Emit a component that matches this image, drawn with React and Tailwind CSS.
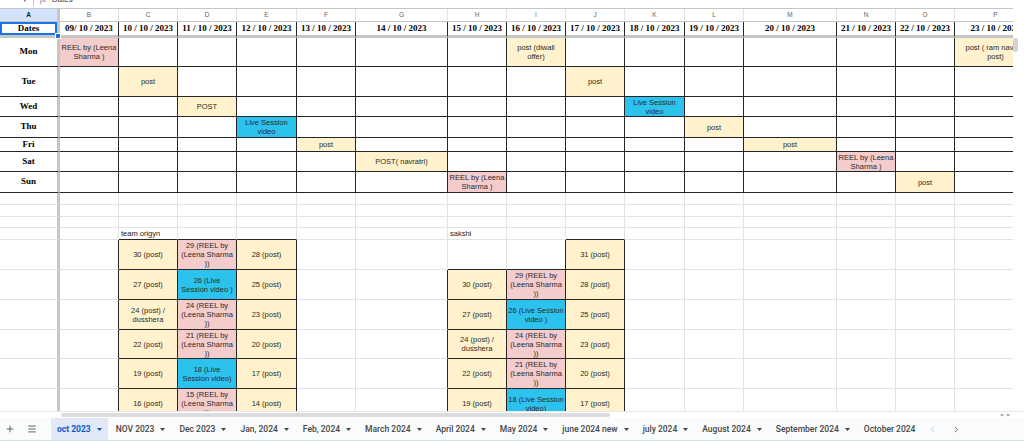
import { Plus, Menu, ChevronLeft, ChevronRight } from 'lucide-react';

const COLS =
  'grid-cols-[60px_59px_59px_59px_60px_59px_92px_59px_59px_59px_60px_59px_93px_59px_59px_82px]';
const ROWS =
  'grid-rows-[16px_29px_30px_20px_21px_14px_20px_21px_12px_12px_11px_12px_30px_30px_30px_29px_30px_30px]';
const LETTERS = 'ABCDEFGHIJKLMNOP'.split('');

const Y = 'bg-[#fff2cc]';
const R = 'bg-[#f4cccc]';
const B = 'bg-[#2cc2ee] text-[#0c2c48]';

const DATES = [
  '09/ 10 / 2023', '10 / 10 / 2023', '11 / 10 / 2023', '12 / 10 / 2023', '13 / 10 / 2023',
  '14 / 10 / 2023', '15 / 10 / 2023', '16 / 10 / 2023', '17 / 10 / 2023', '18 / 10 / 2023',
  '19 / 10 / 2023', '20 / 10 / 2023', '21 / 10 / 2023', '22 / 10 / 2023', '23 / 10 / 2023',
];

const REEL = 'REEL by (Leena\nSharma )';
const LIVE = 'Live Session\nvideo';

// day label + {column index: [colour, text]}
const WEEK = [
  ['Mon', { 1: [R, REEL], 8: [Y, 'post (diwali\noffer)'], 15: [Y, 'post ( ram navami\npost)'] }],
  ['Tue', { 2: [Y, 'post'], 9: [Y, 'post'] }],
  ['Wed', { 3: [Y, 'POST'], 10: [B, LIVE] }],
  ['Thu', { 4: [B, LIVE], 11: [Y, 'post'] }],
  ['Fri', { 5: [Y, 'post'], 12: [Y, 'post'] }],
  ['Sat', { 6: [Y, 'POST( navratri)'], 13: [R, REEL] }],
  ['Sun', { 7: [R, REEL], 14: [Y, 'post'] }],
];

const reel = (n) => [R, `${n} (REEL by (Leena Sharma ))`];
const post = (n) => [Y, `${n} (post)`];

const ORIGYN = [
  [post(30), reel(29), post(28)],
  [post(27), [B, '26 (Live\nSession video )'], post(25)],
  [[Y, '24 (post) /\ndusshera'], reel(24), post(23)],
  [post(22), reel(21), post(20)],
  [post(19), [B, '18 (Live\nSession video)'], post(17)],
  [post(16), reel(15), post(14)],
];

const SAKSHI = [
  [null, null, post(31)],
  [post(30), reel(29), post(28)],
  [post(27), [B, '26 (Live Session\nvideo )'], post(25)],
  [[Y, '24 (post) /\ndusshera'], reel(24), post(23)],
  [post(22), reel(21), post(20)],
  [post(19), [B, '18 (Live Session\nvideo)'], post(17)],
];

const TABS = [
  'NOV 2023', 'Dec 2023', 'Jan, 2024', 'Feb, 2024', 'March 2024', 'April 2024', 'May 2024',
  'june 2024 new', 'july 2024', 'August 2024', 'September 2024', 'October 2024',
];

function buildRows() {
  const rows = [];
  rows.push([{ t: 'Dates', head: true, sel: true }, ...DATES.map((t) => ({ t, head: true }))]);
  WEEK.forEach(([day, marks]) => {
    const row = [{ t: day, head: true }];
    for (let c = 1; c < 16; c++) row.push(marks[c] ? { bg: marks[c][0], t: marks[c][1] } : null);
    rows.push(row);
  });
  for (let i = 0; i < 3; i++) rows.push(Array(16).fill(null));
  const labels = Array(16).fill(null);
  labels[2] = { t: 'team origyn', label: true };
  labels[7] = { t: 'sakshi', label: true };
  rows.push(labels);
  for (let i = 0; i < 6; i++) {
    const row = Array(16).fill(null);
    ORIGYN[i].forEach((cell, k) => { if (cell) row[2 + k] = { bg: cell[0], t: cell[1] }; });
    SAKSHI[i].forEach((cell, k) => { if (cell) row[7 + k] = { bg: cell[0], t: cell[1] }; });
    rows.push(row);
  }
  return rows;
}

// cells that carry the dark outline
function boxed(r, c) {
  if (c > 15 || r > 17) return false;
  if (r <= 7) return true;
  if (r >= 12 && c >= 2 && c <= 4) return true;
  if (r >= 12 && c === 9) return true;
  if (r >= 13 && (c === 7 || c === 8)) return true;
  return false;
}

function Cell({ cell, r, c }) {
  const right =
    c === 0
      ? 'border-r-[3px] border-r-[#c4c7c5]'
      : boxed(r, c) || boxed(r, c + 1)
        ? 'border-r border-r-[#262626]'
        : 'border-r border-r-[#e2e2e2]';
  const bottom =
    r === 0
      ? 'border-b-[3px] border-b-[#c4c7c5]'
      : boxed(r, c) || boxed(r + 1, c)
        ? 'border-b border-b-[#262626]'
        : 'border-b border-b-[#e2e2e2]';

  if (!cell) return <div className={`${right} ${bottom}`} />;

  if (cell.label) {
    return (
      <div className={`${right} ${bottom} relative z-10 flex items-center pl-[2px] whitespace-nowrap text-[7.5px] text-[#222]`}>
        {cell.t}
      </div>
    );
  }

  if (cell.head) {
    return (
      <div
        className={`${right} ${bottom} relative flex items-center justify-center whitespace-nowrap font-['Liberation_Serif',serif] text-[9px] font-bold text-black ${cell.sel ? 'z-10' : 'overflow-hidden'}`}
      >
        {cell.t}
        {cell.sel && (
          <>
            <span className="absolute inset-0 border-2 border-[#1a73e8]" />
            <span className="absolute -bottom-[4px] -right-[4px] h-[6px] w-[6px] border border-white bg-[#1a73e8]" />
          </>
        )}
      </div>
    );
  }

  return (
    <div
      className={`${right} ${bottom} ${cell.bg} flex items-center justify-center overflow-hidden whitespace-pre-line text-center text-[7.5px] leading-[9px] text-[#2a2a2a]`}
    >
      {cell.t}
    </div>
  );
}

function Caret() {
  return (
    <svg width="5" height="3" viewBox="0 0 5 3" className="ml-[6px] shrink-0">
      <path d="M0 0h5L2.5 3z" fill="currentColor" />
    </svg>
  );
}

export default function App() {
  const rows = buildRows();

  return (
    <div className="flex h-[441px] w-[1024px] flex-col overflow-hidden bg-white font-['Liberation_Sans',Arial,sans-serif]">
      {/* formula bar, mostly scrolled away */}
      <div className="h-[8px] shrink-0 overflow-hidden">
        <div className="-mt-[8px] flex h-[16px] items-center text-[8px] text-[#5f6368]">
          <span className="ml-[23px] text-[7px]">▾</span>
          <span className="ml-[6px] h-[12px] w-px bg-[#c4c7c5]" />
          <span className="ml-[6px] italic font-['Liberation_Serif',serif]">fx</span>
          <span className="ml-[6px] text-[#3c4043]">Dates</span>
        </div>
      </div>

      <div className="flex h-[403px] shrink-0">
        <div className="w-[1013px] overflow-hidden">
          {/* column letters */}
          <div className={`grid ${COLS} h-[14px] w-[1037px] border-t border-b border-[#c4c7c5]`}>
            {LETTERS.map((l, i) => (
              <div
                key={l}
                className={`flex items-center justify-center text-[6.5px] ${
                  i === 0
                    ? 'border-r-[3px] border-r-[#c4c7c5] bg-[#d3e3fd] font-bold text-[#041e49]'
                    : 'border-r border-r-[#e1e3e1] text-[#5f6368]'
                }`}
              >
                {l}
              </div>
            ))}
          </div>

          {/* sheet body */}
          <div className={`grid ${COLS} ${ROWS} w-[1037px]`}>
            {rows.map((row, r) => row.map((cell, c) => <Cell key={`${r}-${c}`} cell={cell} r={r} c={c} />))}
          </div>
        </div>

        {/* vertical scrollbar */}
        <div className="w-[11px] bg-white pt-[30px]">
          <div className="h-[14px] w-[5px] rounded-full bg-[#d0d2d4]" />
        </div>
      </div>

      {/* horizontal scrollbar */}
      <div className="flex h-[7px] shrink-0 items-center border-t border-[#e8e8e8] bg-white">
        <div className="ml-[61px] h-[4px] w-[549px] rounded-full bg-[#dadce0]" />
        <div className="ml-auto mr-[14px] flex items-center gap-[4px] text-[4px] text-[#9aa0a6]">
          <span>◀</span>
          <span>▶</span>
        </div>
      </div>

      {/* sheet tabs */}
      <div className="flex h-[23px] shrink-0 items-center border-b border-[#c8e6e3] bg-[#f9fbfd] font-['Roboto',sans-serif] text-[8.5px]">
        <div className="flex w-[20px] justify-center text-[#444746]">
          <Plus size={10} strokeWidth={2} />
        </div>
        <div className="flex w-[24px] justify-center text-[#444746]">
          <Menu size={10} strokeWidth={2} />
        </div>
        <div className="ml-[7px] flex h-full w-[869px] items-stretch gap-[2px] overflow-hidden">
          <div className="flex shrink-0 items-center bg-[#e1e9f7] px-[6px] font-bold text-[#0b57d0]">
            oct 2023
            <Caret />
          </div>
          {TABS.map((t) => (
            <div key={t} className="flex shrink-0 items-center px-[6px] font-medium text-[#444746]">
              {t}
              <Caret />
            </div>
          ))}
        </div>
        <div className="flex w-[24px] justify-center text-[#b6b9bd]">
          <ChevronLeft size={9} strokeWidth={2} />
        </div>
        <div className="flex w-[24px] justify-center text-[#444746]">
          <ChevronRight size={9} strokeWidth={2} />
        </div>
      </div>
    </div>
  );
}
